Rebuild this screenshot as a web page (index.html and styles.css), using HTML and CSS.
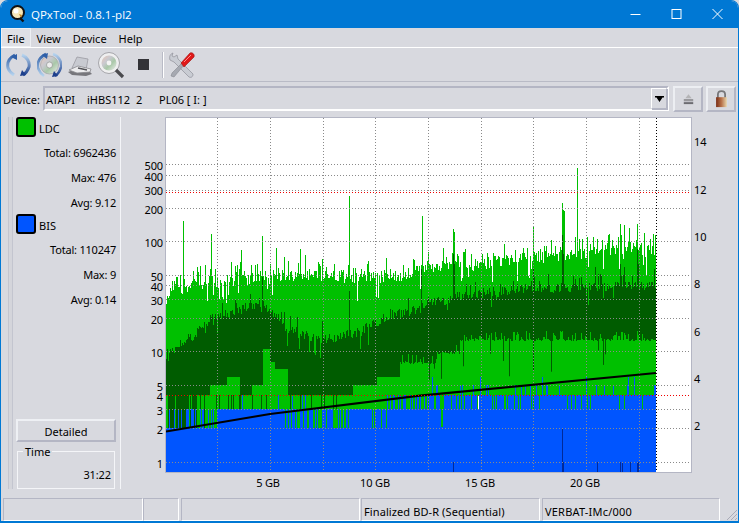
FILE: index.html
```html
<!DOCTYPE html>
<html lang="en">
<head>
<meta charset="utf-8">
<title>QPxTool - 0.8.1-pl2</title>
<link rel="stylesheet" href="styles.css">
</head>
<body>
<div class="window">
  <header class="titlebar">
    <svg class="app-icon" width="16" height="18" viewBox="0 0 16 18">
      <circle cx="7.5" cy="7.5" r="6.5" fill="#f6e7b8" stroke="#111" stroke-width="2"/>
      <circle cx="6" cy="6" r="2.5" fill="#fff"/>
      <path d="M9 9l3 1-1 3z" fill="#c98a20"/>
      <path d="M10 13l3.5 3.5" stroke="#111" stroke-width="2.4"/>
    </svg>
    <span class="title-text">QPxTool - 0.8.1-pl2</span>
    <div class="caption">
      <svg width="41" height="29" viewBox="2.5 0 41 29"><path d="M18 14.5h10" stroke="#fff"/></svg>
      <svg width="41" height="29" viewBox="2.5 0 41 29"><rect x="18.5" y="9.5" width="9" height="9" fill="none" stroke="#fff"/></svg>
      <svg width="41" height="29" viewBox="2.5 0 41 29"><path d="M18 9l10 10M28 9L18 19" stroke="#fff"/></svg>
    </div>
  </header>

  <nav class="menubar">
    <span class="menu-item menu-active">File</span>
    <span class="menu-item">View</span>
    <span class="menu-item">Device</span>
    <span class="menu-item">Help</span>
  </nav>

  <div class="toolbar">
    <svg class="tool" width="25" height="28" viewBox="0 0 25 28">
      <defs>
        <linearGradient id="arcA" x1="0" y1="0" x2="0" y2="1"><stop offset="0" stop-color="#2f5fa8"/><stop offset="1" stop-color="#b5d3ee"/></linearGradient>
        <linearGradient id="arcB" x1="0" y1="0" x2="0" y2="1"><stop offset="0" stop-color="#b5d3ee"/><stop offset="1" stop-color="#1c3f8c"/></linearGradient>
      </defs>
      <path d="M9 4C3 7 1 12 2 17c1 3 3 5 6 7" fill="none" stroke="url(#arcA)" stroke-width="3"/>
      <path d="M5 6l6-3 0 6z" fill="#2f5fa8"/>
      <path d="M16 4c5 2 8 7 7 12-1 3-3 6-6 8" fill="none" stroke="url(#arcB)" stroke-width="3"/>
      <path d="M20 24l-6 1 2-6z" fill="#1c3f8c"/>
    </svg>
    <svg class="tool" width="25" height="28" viewBox="0 0 25 28">
      <defs>
        <linearGradient id="cd" x1="0" y1="0" x2="1" y2="1"><stop offset="0" stop-color="#e8c8b8"/><stop offset=".35" stop-color="#c9c9d0"/><stop offset=".6" stop-color="#a9c8a8"/><stop offset="1" stop-color="#eeeeee"/></linearGradient>
      </defs>
      <circle cx="12.5" cy="14" r="9" fill="url(#cd)" stroke="#9a9aa0" stroke-width=".6"/>
      <circle cx="12.5" cy="14" r="3" fill="#eee" stroke="#888" stroke-width=".6"/>
      <path d="M9 3C3 6 0 11 1 17c1 3 3 6 6 8" fill="none" stroke="url(#arcA)" stroke-width="2.6"/>
      <path d="M16 3c6 2 9 8 8 13-1 4-3 7-6 9" fill="none" stroke="url(#arcB)" stroke-width="2.6"/>
      <path d="M5 4l6-2-1 6z" fill="#2f5fa8"/>
      <path d="M21 25l-6 1 2-6z" fill="#1c3f8c"/>
    </svg>
    <svg class="tool" width="25" height="28" viewBox="0 0 25 28">
      <path d="M0 21l8-3 13 2 3 3-6 2-14-1z" fill="#77777c"/>
      <path d="M4 17L9 6l11 2-2 11z" fill="#c8cad1" stroke="#9a9ba2" stroke-width=".8"/>
      <path d="M1 19l9-4 13 3-1 3-13 1z" fill="#ececee" stroke="#88888d" stroke-width=".8"/>
      <path d="M10 17l9 2" stroke="#55555a" stroke-width="1.4"/>
    </svg>
    <svg class="tool tool-lens" width="27" height="28" viewBox="0 0 27 28">
      <circle cx="11" cy="12" r="10.5" fill="#efeff0" stroke="#a5a5aa"/>
      <circle cx="11" cy="12" r="7.5" fill="url(#cd)"/>
      <circle cx="11" cy="12" r="2.4" fill="#f4f4f4"/>
      <path d="M18 19l7 7" stroke="#4a4a4e" stroke-width="3.2"/>
    </svg>
    <span class="stop"></span>
    <span class="tool-sep"></span>
    <svg class="tool" width="28" height="28" viewBox="0 0 28 28">
      <path d="M5 2c-3 1-4 4-3 7l4 2L21 26c2 1 4 0 4-3L10 8 9 4 6 6 4 5z" fill="#c9ccd3" stroke="#8f9199" stroke-width=".7"/>
      <path d="M3 25l1-3 10-10 2 2L6 26z" fill="#a6a9b1" stroke="#7d7f86" stroke-width=".5"/>
      <path d="M13 12L22 2c2-1 5 1 4 4l-10 10z" fill="#e01818" stroke="#9c1212" stroke-width=".6"/>
      <path d="M16 11l7-7" stroke="#ff8a8a"/>
    </svg>
  </div>

  <div class="device-row">
    <span class="device-label">Device:</span>
    <div class="combo">
      <span class="combo-text"><span>ATAPI</span><span>iHBS112</span><span>2</span><span>PL06 [ I: ]</span></span>
      <span class="combo-btn"><svg width="9" height="6" viewBox="0 0 9 6"><path d="M0 0h9v1.500H0zM1.500 1.500h6L4.500 6z" fill="#000"/></svg></span>
    </div>
    <button class="icon-btn" type="button" aria-label="Eject">
      <svg width="11" height="12" viewBox="0 0 14 14"><path d="M7 1l4 5H3z" fill="#b4b4b6"/><rect x="1" y="7" width="12" height="3" fill="#98989c"/><rect x="1" y="11" width="12" height="2.500" fill="#6c6c71"/></svg>
    </button>
    <button class="icon-btn" type="button" aria-label="Lock">
      <svg width="13" height="18" viewBox="0 0 14 20"><path d="M3 9V5c0-5 8-5 8 0v4" fill="none" stroke="#77777a" stroke-width="2"/><defs><linearGradient id="lk" x1="0" x2="1" y1="0" y2="0"><stop offset="0" stop-color="#7a2c14"/><stop offset=".5" stop-color="#b8734a"/><stop offset="1" stop-color="#e8d8b0"/></linearGradient></defs><rect x="1" y="8" width="12" height="11" fill="url(#lk)"/></svg>
    </button>
  </div>

  <main class="content">
    <aside class="side">
      <div class="legend-row"><span class="swatch swatch-ldc"></span><span class="legend-name">LDC</span></div>
      <div class="stat">Total: 6962436</div>
      <div class="stat">Max: 476</div>
      <div class="stat">Avg: 9.12</div>
      <div class="legend-row"><span class="swatch swatch-bis"></span><span class="legend-name">BIS</span></div>
      <div class="stat">Total: 110247</div>
      <div class="stat">Max: 9</div>
      <div class="stat">Avg: 0.14</div>
      <div class="side-spacer"></div>
      <button class="detail-btn" type="button">Detailed</button>
      <fieldset class="time-box">
        <legend>Time</legend>
        <div class="time-value">31:22</div>
      </fieldset>
    </aside>
    <section class="chart" id="chart">
      <canvas class="plot" id="plot" width="525" height="354"></canvas>
    </section>
  </main>

  <footer class="statusbar">
    <span class="cell cell-a"></span>
    <span class="cell cell-b"></span>
    <span class="cell cell-c"></span>
    <span class="cell cell-d">Finalized BD-R (Sequential)</span>
    <span class="cell cell-e">VERBAT-IMc/000</span>
    <svg class="grip" width="14" height="14" viewBox="0 0 14 14"><path d="M13 3L3 13M13 7l-6 6M13 11l-2 2" stroke="#a9abb8"/></svg>
  </footer>
</div>
<script src="chart.js"></script>
</body>
</html>
```
FILE: styles.css
```css
* { box-sizing: border-box; }
html, body { margin: 0; padding: 0; background: #d9dade; }
body {
  width: 739px;
  height: 523px;
  overflow: hidden;
  font-family: "Noto Sans", "Open Sans", sans-serif;
  font-size: 11px;
  color: #000;
}
.window {
  width: 739px;
  height: 523px;
  display: flex;
  flex-direction: column;
  background: #d8d9df;
  border: 1px solid #0078d4;
  border-bottom-width: 2px;
  border-radius: 8px 8px 0 0;
  overflow: hidden;
}
.titlebar {
  height: 28px;
  flex: none;
  margin: -1px -1px 0;
  background: #0078d4;
  color: #fff;
  display: flex;
  align-items: center;
  padding-left: 10px;
  font-family: "Open Sans", "Noto Sans", sans-serif;
  font-size: 11.5px;
}
.app-icon { flex: none; margin-right: 5px; }
.title-text { flex: 1; }
.caption { display: flex; margin-right: 1px; }
.caption svg { display: block; }

.menubar {
  height: 20px;
  flex: none;
  display: flex;
  align-items: center;
  border-bottom: 1px solid #fff;
}
.menu-item { padding: 3px 6px 1px; }
.menu-active { background: #dfe0e5; box-shadow: inset 0 0 0 1px #eef0f4; }

.toolbar {
  height: 34px;
  flex: none;
  display: flex;
  align-items: center;
  padding-left: 5px;
  border-bottom: 1px solid #b9bbc6;
}
.tool { display: block; margin-right: 6px; flex: none; }
.tool-lens { margin-left: -1px; margin-right: 0; }
.stop {
  width: 11px;
  height: 11px;
  margin: 0 13px 0 13px;
  background: #333338;
  flex: none;
}
.tool-sep {
  width: 2px;
  height: 26px;
  border-left: 1px solid #b9bbc6;
  border-right: 1px solid #fff;
  margin-right: 4px;
  flex: none;
}

.device-row {
  height: 31px;
  flex: none;
  display: flex;
  align-items: center;
  padding: 2px 0 0 2px;
}
.device-label { width: 40px; flex: none; padding-top: 2px; }
.combo {
  width: 626px;
  height: 25px;
  flex: none;
  display: flex;
  align-items: center;
  justify-content: space-between;
  border: 2px solid;
  border-color: #b4b6c4 #fff #fff #b4b6c4;
  padding-left: 1px;
}
.combo-text { display: flex; padding-top: 1px; }
.combo-text span:nth-child(1) { width: 41px; }
.combo-text span:nth-child(2) { width: 49px; }
.combo-text span:nth-child(3) { width: 23px; }
.combo-btn {
  width: 16px;
  height: 21px;
  display: flex;
  align-items: center;
  justify-content: center;
  border: 1px solid;
  border-color: #fff #b4b6c4 #b4b6c4 #fff;
  box-shadow: 1px 1px 0 #b4b6c4;
}
.icon-btn {
  width: 30px;
  height: 26px;
  flex: none;
  margin-left: 3px;
  padding: 0;
  display: flex;
  align-items: center;
  justify-content: center;
  background: #d8d9df;
  border: 2px solid;
  border-color: #eceef2 #b4b6c4 #b4b6c4 #eceef2;
}
.combo + .icon-btn { margin-left: 4px; }

.content { flex: 1; display: flex; min-height: 0; }
.side {
  width: 113px;
  height: 372px;
  margin: 4px 0 0 7px;
  flex: none;
  display: flex;
  flex-direction: column;
  align-items: flex-start;
  padding: 0 4px 0 7px;
  border-left: 1px solid #c3c5cf;
  border-right: 1px solid #f4f5f8;
  box-shadow: inset 3px 0 0 #d4d5db, inset 4px 0 0 #c3c5cf;
}
.legend-row {
  display: flex;
  align-items: center;
  gap: 3px;
  height: 20px;
  margin-bottom: 3px;
}
.legend-name { padding-top: 2px; }
.swatch {
  width: 20px;
  height: 20px;
  flex: none;
  border: 2px solid #000;
  border-radius: 3px;
}
.swatch-ldc { background: #00c000; }
.swatch-bis { background: #0055ff; }
.stat {
  align-self: stretch;
  height: 24.75px;
  line-height: 25.5px;
  text-align: right;
  letter-spacing: -.2px;
}
.side-spacer { flex: 1; }
.detail-btn {
  width: 100px;
  height: 23px;
  flex: none;
  background: #d8d9df;
  font: inherit;
  color: #000;
  padding: 2px 0 0;
  border: 2px solid;
  border-color: #eef0f4 #b4b6c4 #b4b6c4 #eef0f4;
  margin-bottom: 3px;
}
.time-box {
  width: 98px;
  height: 44px;
  flex: none;
  margin: 0 0 0 1px;
  padding: 0 3px 0 0;
  border: 1px solid #f4f5f8;
}
.time-box legend { margin-left: 5px; padding: 0 2px; line-height: 13px; }
.time-value { text-align: right; margin-top: 9px; letter-spacing: -.1px; }

.chart { flex: 1; position: relative; }
.plot {
  position: absolute;
  left: 44px;
  top: 4px;
  width: 527px;
  height: 356px;
  border: 1px solid #b4b6c4;
  background: #fff;
}
.tick { position: absolute; line-height: 13px; white-space: nowrap; letter-spacing: -.15px; }
.tick-left { width: 42px; left: 0; text-align: right; }
.tick-x { width: 60px; text-align: center; }

.statusbar {
  height: 24px;
  flex: none;
  display: flex;
  position: relative;
  padding: 1px 0 0 2px;
}
.cell {
  height: 23px;
  display: block;
  border: 1px solid;
  border-color: #b4b6c4 #fff #fff #b4b6c4;
  padding: 5px 0 0 2px;
  line-height: 15px;
  white-space: nowrap;
  letter-spacing: .1px;
}
.cell-a { width: 140px; }
.cell-b { width: 36px; }
.cell-c { width: 179px; margin-left: 2px; }
.cell-d { width: 179px; margin-left: 1px; }
.cell-e { width: 178px; margin-left: 2px; letter-spacing: .2px; }
.grip { position: absolute; right: 0; bottom: 0; }
```
FILE: chart.js
```js
(function () {
  var canvas = document.getElementById('plot');
  var chart = document.getElementById('chart');
  var ctx = canvas.getContext('2d');
  var OX = 166, OY = 119, W = 525, H = 354, END = 656, BOTTOM = 473;
  var GREEN = '#00c000', DARK = '#005c00', BLUE = '#0055ff', NAVY = '#002a9a';
  var seed = 12345;
  function rnd() { seed = (seed * 1664525 + 1013904223) % 4294967296; return seed / 4294967296; }
  function lerp(pts, x) {
    for (var i = 1; i < pts.length; i++) {
      if (x <= pts[i][0]) {
        var a = pts[i - 1], b = pts[i];
        return a[1] + (b[1] - a[1]) * (x - a[0]) / (b[0] - a[0]);
      }
    }
    return pts[pts.length - 1][1];
  }
  function step(pts, x) {
    var v = pts[0][1];
    for (var i = 0; i < pts.length; i++) { if (x >= pts[i][0]) v = pts[i][1]; }
    return v;
  }
  var topPts = [[166,302],[175,296],[200,288],[250,284],[300,278],[350,282],[400,280],[428,272],[480,268],[530,262],[590,258],[656,256]];
  var darkPts = [[166,360],[176,348],[193,337],[210,320],[227,315],[260,303],[270,310],[290,333],[326,340],[360,333],[386,317],[420,310],[428,305],[470,295],[530,290],[620,287],[656,287]];
  var lowSteps = [[166,430],[195,396],[210,386],[227,378],[240,396],[252,386],[263,350],[270,363],[275,370],[288,396],[353,386],[377,378],[400,363],[437,353],[460,340]];
  var spikes = {183:222,211:235,262:237,241:251,276:249,300:250,349:197,422:217,453:230,454:233,562:204,563:211,564:212,577:169,533:228,620:225,624:226,637:225,655:236,644:234,629:229,650:240};
  var darkSpikes = {349:292,262:278,562:236,563:255,453:255,454:265,533:270,620:265,624:268,637:250,638:265,575:280,466:285,421:270,500:285,525:285,600:275};
  function rect(x, y0, y1, c) {
    if (y1 <= y0) return;
    ctx.fillStyle = c;
    ctx.fillRect(x - OX, y0 - OY, 1, y1 - y0);
  }
  for (var x = OX; x < END; x++) {
    var t = lerp(topPts, x), r = rnd(), noise;
    if (r < 0.62) noise = -rnd() * 13;
    else if (r < 0.93) noise = -8 - rnd() * 18;
    else noise = 5 + rnd() * 12;
    var top = Math.round(t + noise + 3);
    if (spikes[x]) top = spikes[x];
    rect(x, top, BOTTOM, GREEN);

    var d = lerp(darkPts, x) + (rnd() - 0.5) * 10;
    if (rnd() < 0.1) d -= rnd() * 16;
    if (rnd() < 0.07) d += rnd() * 20;
    var low = step(lowSteps, x);
    if (x > 400) low += (rnd() < 0.3 ? -rnd() * 8 : rnd() * 2);
    d = Math.round(d);
    if (darkSpikes[x]) d = darkSpikes[x];
    var lowEnd = Math.round(low);
    if (x > 400 && rnd() < 0.04) lowEnd = low + 10 + rnd() * 28;
    rect(x, d, lowEnd, DARK);

    // dark / green stripes below the main dark band
    if (x < 211) {
      var darkBottom = 429;
      if (x >= 195 && rnd() < 0.5) darkBottom = 396;
      rect(x, 396, darkBottom, DARK);
      if (x >= 175 && x < 211 && rnd() < 0.3) rect(x, 396, 429, GREEN);
      if (x < 195) rect(x, 396, 429, rnd() < 0.12 ? GREEN : DARK);
      if (x >= 195 && rnd() < 0.35) rect(x, 386, 396, DARK);
    } else if (x < 340 && rnd() < 0.12) {
      rect(x, 396, 410, DARK);
    }
    if (x >= 240 && x < 252) rect(x, 386, 396, DARK);

    // blue
    var blueTop = 429;
    if (x < 217) {
      if (rnd() < 0.28) blueTop = 410;
    } else {
      blueTop = 410;
      if (x >= 280 && x < 390 && rnd() < 0.32) blueTop = 429;
      var p = x < 390 ? 0.07 : x < 430 ? 0.4 : x < 540 ? 0.8 : 0.9;
      if (x >= 232 && rnd() < p) blueTop = 396;
      if (x >= 430 && blueTop === 396 && rnd() < 0.14) blueTop = 386;
      if (x >= 380 && blueTop === 396 && rnd() < 0.015) blueTop = 378;
    }
    if (x === 441 || x === 442) blueTop = 428;
    if (x >= 654) blueTop = 386;
    rect(x, blueTop, BOTTOM, BLUE);
    if (x === 478) rect(x, 397, 410, '#fff');
  }
  [453, 562, 563, 597, 620, 622, 630, 637, 638].forEach(function (nx) {
    rect(nx, nx === 562 ? 430 : 463, BOTTOM, NAVY);
  });

  // dotted grid
  function hline(y, color) {
    ctx.fillStyle = color;
    for (var i = 0; i < W; i += 3) ctx.fillRect(i, y - OY, 1, 1);
  }
  function vline(x, color) {
    ctx.fillStyle = color;
    for (var i = 0; i < H; i += 3) ctx.fillRect(x - OX, i, 1, 1);
  }
  [165,176,191,209,242,276,286,300,319,352,386,410,429,463].forEach(function (y) { hline(y, '#8a8a8a'); });
  [217,270,323,375,428,481,533,586,639].forEach(function (x) { vline(x, '#8a8a8a'); });
  vline(END, '#000');

  // black drive-speed curve
  ctx.strokeStyle = '#000';
  ctx.lineWidth = 2.2;
  ctx.beginPath();
  [[166,432.5],[270,415],[420,396.7],[656,374]].forEach(function (p, i) {
    if (i) ctx.lineTo(p[0] - OX, p[1] - OY); else ctx.moveTo(p[0] - OX, p[1] - OY);
  });
  ctx.stroke();

  // red limit lines
  [193, 396].forEach(function (y) { hline(y, '#f00000'); });

  // tick labels
  var CHART_X = 121, CHART_Y = 114;
  function label(text, cls, left, cy) {
    var el = document.createElement('span');
    el.className = 'tick ' + cls;
    el.textContent = text;
    if (left !== null) el.style.left = (left - CHART_X) + 'px';
    el.style.top = (cy - CHART_Y - 6.5) + 'px';
    chart.appendChild(el);
  }
  [[500,166],[400,177],[300,191],[200,210],[100,243],[50,277],[40,287],[30,301],[20,320],[10,353],[5,387],[4,397],[3,411],[2,430],[1,464]].forEach(function (t) {
    label(String(t[0]), 'tick-left', null, t[1]);
  });
  [[14,142],[12,190],[10,237],[8,284],[6,332],[4,379],[2,426]].forEach(function (t) {
    label(String(t[0]), '', 694, t[1]);
  });
  [['5 GB',268],['10 GB',375],['15 GB',480],['20 GB',585]].forEach(function (t) {
    label(t[0], 'tick-x', t[1] - 30, 483);
  });
})();
```
